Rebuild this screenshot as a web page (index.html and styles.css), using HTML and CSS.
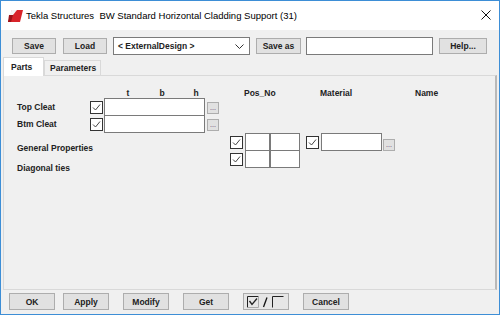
FILE: index.html
```html
<!DOCTYPE html>
<html>
<head>
<meta charset="utf-8">
<link rel="stylesheet" href="styles.css">
</head>
<body>
<div class="window">
  <div class="titlebar">
    <svg class="appicon" width="15" height="12" viewBox="0 0 15 12">
      <polygon points="4,0 15,0 12,12 0,12" fill="#d8232a"/>
      <polygon points="4,0 9,0 5,5 1,5" fill="#f4f4f4"/>
      <polygon points="1,5 5,5 3,12 0,12" fill="#9d1218"/>
    </svg>
    <span class="title">Tekla Structures&nbsp; BW Standard Horizontal Cladding Support (31)</span>
    <svg class="close" width="10" height="10" viewBox="0 0 10 10">
      <path d="M0.5 0.5 L9.5 9.5 M9.5 0.5 L0.5 9.5" stroke="#111" stroke-width="1"/>
    </svg>
  </div>
  <div class="client">
    <div class="toolbar">
      <div class="btn w-save">Save</div>
      <div class="btn w-load">Load</div>
      <div class="combo">
        <span>&lt; ExternalDesign &gt;</span>
        <svg width="9" height="5" viewBox="0 0 9 5"><polyline points="0.5,0.5 4.5,4.5 8.5,0.5" fill="none" stroke="#333" stroke-width="1"/></svg>
      </div>
      <div class="btn w-saveas">Save as</div>
      <div class="textbox w-name"></div>
      <div class="btn w-help">Help...</div>
    </div>
    <div class="tabs">
      <div class="tab active">Parts</div>
      <div class="tab">Parameters</div>
    </div>
    <div class="panel">
      <div class="hdr">
        <span class="hc c-t">t</span>
        <span class="hc c-b">b</span>
        <span class="hc c-h">h</span>
        <span class="hl c-pos">Pos_No</span>
        <span class="hl c-mat">Material</span>
        <span class="hl c-name">Name</span>
      </div>
      <div class="row">
        <span class="lbl">Top Cleat</span>
        <span class="cb"><svg width="11" height="11" viewBox="0 0 11 11"><polyline points="2,5.5 4.5,8 9,2.5" fill="none" stroke="#444" stroke-width="1"/></svg></span>
        <span class="textbox w-dim"></span>
        <span class="dots">...</span>
      </div>
      <div class="row second">
        <span class="lbl">Btm Cleat</span>
        <span class="cb"><svg width="11" height="11" viewBox="0 0 11 11"><polyline points="2,5.5 4.5,8 9,2.5" fill="none" stroke="#444" stroke-width="1"/></svg></span>
        <span class="textbox w-dim"></span>
        <span class="dots">...</span>
      </div>
      <div class="lower">
        <div class="labels">
          <div class="llbl">General Properties</div>
          <div class="llbl gap">Diagonal ties</div>
        </div>
        <div class="fields">
          <div class="frow">
            <span class="cb"><svg width="11" height="11" viewBox="0 0 11 11"><polyline points="2,5.5 4.5,8 9,2.5" fill="none" stroke="#444" stroke-width="1"/></svg></span>
            <span class="textbox w-p1"></span>
            <span class="textbox w-p2"></span>
            <span class="cb mcb"><svg width="11" height="11" viewBox="0 0 11 11"><polyline points="2,5.5 4.5,8 9,2.5" fill="none" stroke="#444" stroke-width="1"/></svg></span>
            <span class="textbox w-mat"></span>
            <span class="dots mdots">...</span>
          </div>
          <div class="frow second">
            <span class="cb"><svg width="11" height="11" viewBox="0 0 11 11"><polyline points="2,5.5 4.5,8 9,2.5" fill="none" stroke="#444" stroke-width="1"/></svg></span>
            <span class="textbox w-p1"></span>
            <span class="textbox w-p2"></span>
          </div>
        </div>
      </div>
    </div>
    <div class="bottombar">
      <div class="btn b-ok">OK</div>
      <div class="btn b-apply">Apply</div>
      <div class="btn b-modify">Modify</div>
      <div class="btn b-get">Get</div>
      <div class="btn b-toggle">
        <svg width="38" height="12" viewBox="0 0 38 12">
          <path d="M0.5 11.5 V0.5 H11.5" fill="none" stroke="#222" stroke-width="1"/>
          <path d="M11.5 0.5 V11.5 H0.5" fill="none" stroke="#aaa" stroke-width="1"/>
          <polyline points="2.5,5 5,8.5 10,2.5" fill="none" stroke="#222" stroke-width="1.3"/>
          <path d="M20 1.5 L16.5 11" stroke="#111" stroke-width="1.3"/>
          <path d="M25.5 11.5 V0.5 H36.5" fill="none" stroke="#222" stroke-width="1"/>
        </svg>
      </div>
      <div class="btn b-cancel">Cancel</div>
    </div>
  </div>
</div>
</body>
</html>
```
FILE: styles.css
```css
html, body {
  margin: 0;
  padding: 0;
}
body {
  width: 500px;
  height: 315px;
  overflow: hidden;
  font-family: "Liberation Sans", Arial, sans-serif;
  font-size: 9px;
  color: #000;
}
.window {
  box-sizing: border-box;
  width: 500px;
  height: 315px;
  border: 1px solid #3d8ed6;
  display: flex;
  flex-direction: column;
  background: #f0f0f0;
}
.titlebar {
  height: 29px;
  background: #fff;
  display: flex;
  align-items: center;
  position: relative;
}
.appicon {
  margin-left: 7px;
  margin-top: 1px;
}
.title {
  margin-left: 3px;
  font-size: 9.5px;
  color: #000;
}
.close {
  position: absolute;
  right: 8px;
  top: 9px;
}
.client {
  flex: 1;
  display: flex;
  flex-direction: column;
}
.toolbar {
  margin-top: 7px;
  height: 18px;
  display: flex;
  align-items: center;
  padding-left: 11px;
}
.btn {
  box-sizing: border-box;
  height: 16px;
  background: #e1e1e1;
  border: 1px solid #adadad;
  display: flex;
  align-items: center;
  justify-content: center;
  font-weight: bold;
  font-size: 8.5px;
  color: #222;
}
.w-save { width: 44px; }
.w-load { width: 44px; margin-left: 7px; }
.combo {
  box-sizing: border-box;
  width: 137px;
  height: 18px;
  margin-left: 6px;
  background: #fff;
  border: 1px solid #7a7a7a;
  display: flex;
  align-items: center;
  justify-content: space-between;
  padding: 0 5px 0 4px;
  font-weight: bold;
  font-size: 8.5px;
  color: #222;
}
.w-saveas { width: 45px; margin-left: 6px; }
.textbox {
  box-sizing: border-box;
  height: 18px;
  background: #fff;
  border: 1px solid #7a7a7a;
  display: block;
  flex: none;
}
.w-name { width: 127px; margin-left: 5px; }
.w-help { width: 48px; margin-left: 6px; }
.tabs {
  margin-top: 2px;
  height: 18px;
  display: flex;
  align-items: flex-end;
  padding-left: 2px;
  position: relative;
  z-index: 1;
}
.tab {
  box-sizing: border-box;
  height: 15px;
  border: 1px solid #d9d9d9;
  border-bottom: none;
  background: #f0f0f0;
  padding: 0 5px;
  display: flex;
  align-items: center;
  font-weight: bold;
  font-size: 8.5px;
  width: 57px;
  color: #222;
}
.tab.active {
  height: 19px;
  width: 41px;
  margin-bottom: -1px;
  background: #fff;
  border-color: #d9d9d9;
  padding-left: 7px;
}
.panel {
  box-sizing: border-box;
  margin-left: 2px;
  width: 494px;
  height: 215px;
  border: 1px solid #d9d9d9;
  border-right: 2px solid #b9b9b9;
  background: #f0f0f0;
  font-weight: bold;
  font-size: 8.5px;
  color: #222;
}
.hdr {
  margin-top: 12px;
  height: 10px;
  line-height: 10px;
  display: flex;
}
.hc {
  width: 34px;
  text-align: center;
}
.c-t { margin-left: 107px; }
.hl { display: block; }
.c-pos { margin-left: 31px; width: 76px; }
.c-mat { width: 95px; }
.c-name { width: 40px; }
.row {
  height: 18px;
  display: flex;
  align-items: center;
}
.row.second, .frow.second {
  margin-top: -1px;
}
.lbl {
  margin-left: 13px;
  width: 73px;
}
.cb {
  box-sizing: border-box;
  width: 13px;
  height: 13px;
  border: 1px solid #333;
  background: #fff;
  display: flex;
  align-items: center;
  justify-content: center;
  flex: none;
}
.cb svg { display: block; }
.row .textbox { margin-left: 1px; }
.w-dim { width: 101px; }
.dots {
  box-sizing: border-box;
  width: 12px;
  height: 12px;
  margin-left: 2px;
  margin-top: 2px;
  background: #e1e1e1;
  border: 1px solid #adadad;
  font-size: 7px;
  line-height: 9px;
  text-align: center;
  color: #553366;
  font-weight: normal;
  flex: none;
}
.lower {
  display: flex;
}
.labels {
  margin-left: 13px;
  width: 213px;
  padding-top: 9px;
}
.llbl {
  height: 12px;
  line-height: 12px;
}
.llbl.gap { margin-top: 8px; }
.frow {
  height: 18px;
  display: flex;
  align-items: center;
}
.w-p1 { width: 25px; margin-left: 2px; }
.w-p2 { width: 30px; margin-left: 0; }
.mcb { margin-left: 6px; }
.w-mat { width: 61px; margin-left: 2px; }
.mdots { margin-left: 1px; margin-top: 5px; }
.bottombar {
  margin-top: 3px;
  height: 17px;
  display: flex;
  padding-left: 8px;
}
.bottombar .btn { height: 17px; width: 46px; }
.b-apply { margin-left: 8px; }
.b-modify { margin-left: 14px; }
.b-get { margin-left: 14px; }
.b-toggle { margin-left: 14px; background: #e6e6e6; }
.b-cancel { margin-left: 14px; }
```
